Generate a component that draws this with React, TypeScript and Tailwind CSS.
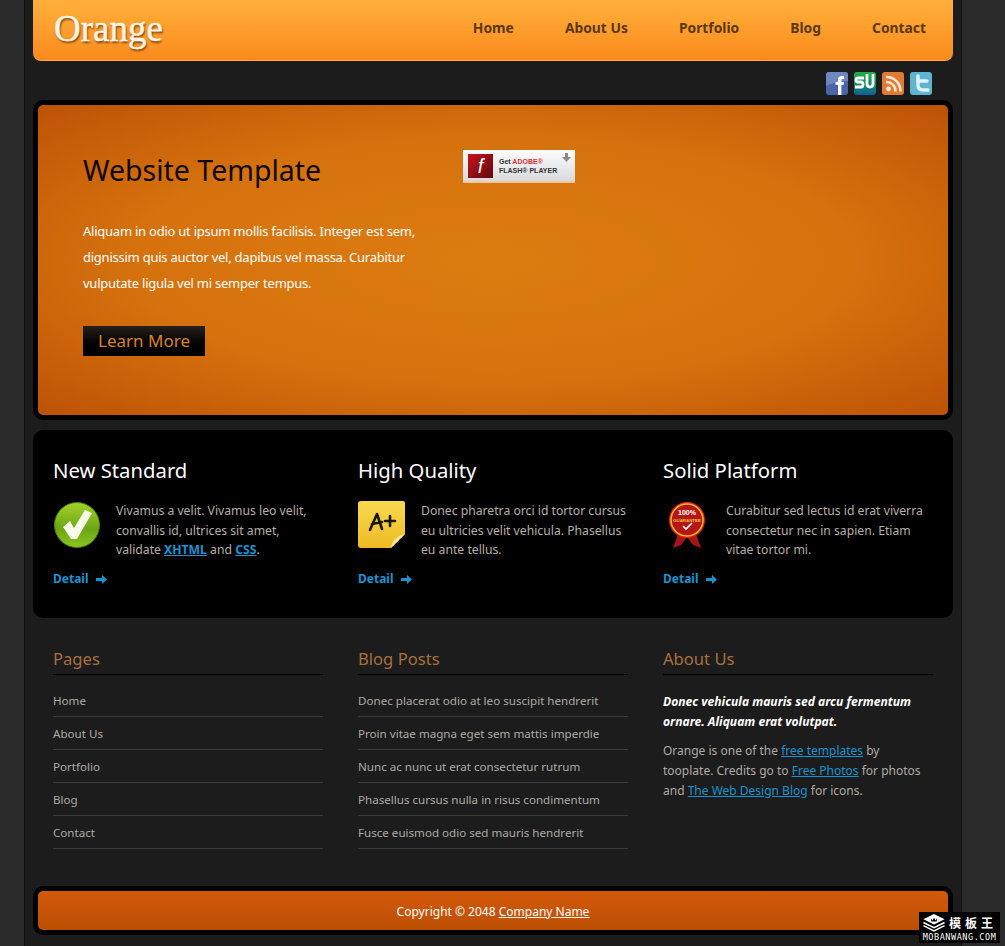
import React from 'react';

const font = { fontFamily: '"Noto Sans", "DejaVu Sans", sans-serif' };

const features = [
  { title: 'New Standard', icon: 'check', lines: null },
  { title: 'High Quality', icon: 'note', lines: 'Donec pharetra orci id tortor cursus eu ultricies velit vehicula. Phasellus eu ante tellus.' },
  { title: 'Solid Platform', icon: 'seal', lines: 'Curabitur sed lectus id erat viverra consectetur nec in sapien. Etiam vitae tortor mi.' },
];

const pages = ['Home', 'About Us', 'Portfolio', 'Blog', 'Contact'];
const posts = [
  'Donec placerat odio at leo suscipit hendrerit',
  'Proin vitae magna eget sem mattis imperdie',
  'Nunc ac nunc ut erat consectetur rutrum',
  'Phasellus cursus nulla in risus condimentum',
  'Fusce euismod odio sed mauris hendrerit',
];

function CheckIcon() {
  return (
    <svg width="48" height="48" viewBox="0 0 48 48">
      <defs>
        <linearGradient id="chk" x1="0" y1="0" x2="0" y2="1">
          <stop offset="0" stopColor="#a4d12c" />
          <stop offset="0.6" stopColor="#6ba513" />
          <stop offset="1" stopColor="#8cc522" />
        </linearGradient>
      </defs>
      <circle cx="24" cy="24" r="22.5" fill="url(#chk)" stroke="#4c7d10" strokeWidth="1" />
      <path d="M10 26 L17 20 L21 27 L32 9 L39 12 L24 38 L18 38 Z" fill="#f8faea" />
    </svg>
  );
}

function NoteIcon() {
  return (
    <svg width="48" height="48" viewBox="0 0 48 48">
      <defs>
        <linearGradient id="note" x1="0" y1="0" x2="0" y2="1">
          <stop offset="0" stopColor="#f7da4e" />
          <stop offset="1" stopColor="#eebb25" />
        </linearGradient>
      </defs>
      <path d="M3 0 H45 Q47 0 47 3 V33 L33 47 H3 Q0 47 0 44 V3 Q0 0 3 0 Z" fill="url(#note)" />
      <path d="M47 33 L33 47 Q34 36 47 33 Z" fill="#fbe88e" />
      <path d="M12 29 L19 13 L24 28 M14 23 L24 21 M27 20 H37 M32 15 V25" fill="none" stroke="#1c1608" strokeWidth="2.6" strokeLinecap="round" strokeLinejoin="round" />
    </svg>
  );
}

function SealIcon() {
  return (
    <svg width="48" height="48" viewBox="0 0 48 48">
      <path d="M16 30 L10 47 L18 44 L24 36 L30 44 L38 47 L32 30 Z" fill="#a5141a" />
      <circle cx="24" cy="19" r="18" fill="#e0201c" />
      <circle cx="24" cy="19" r="16" fill="#b51716" stroke="#f4b830" strokeWidth="1.5" />
      <text x="24" y="14" textAnchor="middle" fontSize="7" fontWeight="700" fill="#fff" fontFamily="Liberation Sans">100%</text>
      <text x="24" y="21" textAnchor="middle" fontSize="4.4" fontWeight="700" fill="#f4c040" fontFamily="Liberation Sans">GUARANTEE</text>
      <path d="M20 25 L23 28 L29 22" fill="none" stroke="#fff" strokeWidth="1.6" />
    </svg>
  );
}

function Social() {
  return (
    <div className="flex justify-end gap-[6px] pr-[21px] pt-[11px] h-[39px]">
      <svg width="22" height="23" viewBox="0 0 22 23">
        <rect width="22" height="23" rx="3" fill="#4a66a8" />
        <path d="M0 3 Q0 0 3 0 H19 Q22 0 22 3 V9 Q10 9 0 14 Z" fill="#6f88bf" />
        <path d="M12 23 V13 H9.5 V10 H12 V7.5 Q12 4 16 4 H18 V7 H16.5 Q15.4 7 15.4 8.2 V10 H18 L17.5 13 H15.4 V23 Z" fill="#fff" />
      </svg>
      <svg width="22" height="23" viewBox="0 0 22 23">
        <defs>
          <linearGradient id="stumble" x1="0" y1="0" x2="0" y2="1">
            <stop offset="0" stopColor="#22b04a" />
            <stop offset="0.6" stopColor="#0f8a66" />
            <stop offset="1" stopColor="#125f9c" />
          </linearGradient>
        </defs>
        <rect width="22" height="23" rx="3" fill="url(#stumble)" />
        <path d="M10 6 H4 Q2 6 2 8 Q2 10 4 10 H7 Q9 10 9 12.5 Q9 15 7 15 H1 M13 2 V12 Q13 15 16 15 Q19 15 19 12 V2" fill="none" stroke="#fff" strokeWidth="2.8" />
      </svg>
      <svg width="22" height="23" viewBox="0 0 22 23">
        <rect width="22" height="23" rx="3" fill="#e07a35" />
        <circle cx="6.5" cy="17" r="2.4" fill="#fbe6d2" />
        <path d="M4 10 A9 9 0 0 1 13.5 19.5 M4 5 A14 14 0 0 1 18.5 19.5" fill="none" stroke="#fbe6d2" strokeWidth="2.6" />
      </svg>
      <svg width="22" height="23" viewBox="0 0 22 23">
        <rect width="22" height="23" rx="3" fill="#5fb4cf" />
        <path d="M8 4 V13 Q8 18 13 18 H18 M8 9 H17" fill="none" stroke="#dff4fa" strokeWidth="3.4" strokeLinecap="round" />
      </svg>
    </div>
  );
}

function FlashBadge() {
  return (
    <div className="w-[112px] h-[33px] bg-gradient-to-b from-[#fdfdfd] to-[#d9dadd] border-b-2 border-[#f2c89a] flex items-center relative">
      <div className="ml-[5px] w-[25px] h-[24px] bg-gradient-to-br from-[#c8141c] to-[#5e0a0e] text-white flex items-center justify-center text-[20px] italic leading-none" style={{ fontFamily: '"Liberation Sans", sans-serif' }}>f</div>
      <div className="ml-[6px] text-[7px] font-bold leading-[9px] text-[#333]" style={{ fontFamily: '"Liberation Sans", sans-serif' }}>
        <div>Get <span className="text-[#d8303a]">ADOBE®</span></div>
        <div>FLASH® PLAYER</div>
      </div>
      <svg className="absolute right-[4px] top-[3px]" width="9" height="10" viewBox="0 0 9 10">
        <path d="M3 0 H6 V4 H9 L4.5 9 L0 4 H3 Z" fill="#8a8a8a" />
      </svg>
    </div>
  );
}

function Detail() {
  return (
    <a className="flex items-center gap-[7px] text-[12px] font-bold text-[#1a94d0] leading-[16px]">
      Detail
      <svg width="11" height="9" viewBox="0 0 11 9">
        <path d="M0 3 H6 V0 L11 4.5 L6 9 V6 H0 Z" fill="#1a94d0" />
      </svg>
    </a>
  );
}

function Watermark() {
  return (
    <div className="absolute right-[5px] bottom-[3px] w-[81px] h-[31px] bg-black flex flex-col items-center justify-center text-white">
      <div className="flex items-center gap-[3px] h-[19px] whitespace-nowrap">
        <svg className="shrink-0" width="24" height="19" viewBox="0 0 22 18">
          <path d="M11 1 L21 6 L11 11 L1 6 Z" fill="#fff" />
          <path d="M8 5 L9.5 7 L11 4.5 L12.5 7 L14 5 L13.5 8 H8.5 Z" fill="#000" />
          <path d="M1 9 L11 14 L21 9 M1 12 L11 17 L21 12" fill="none" stroke="#fff" strokeWidth="1.4" />
        </svg>
        <span className="text-[12px] font-bold tracking-[4px] leading-none" style={{ fontFamily: '"Noto Sans CJK SC", sans-serif' }}>模板王</span>
      </div>
      <div className="text-[8.5px] tracking-[0.55px] leading-[10px]" style={{ fontFamily: '"DejaVu Sans Mono", monospace' }}>MOBANWANG.COM</div>
    </div>
  );
}

export default function App() {
  return (
    <div className="relative h-[946px] overflow-hidden bg-[#2a2a2a]" style={font}>
      <div className="ml-[24px] w-[938px] h-full border-x border-[#0f0f0f] bg-[#1c1c1c] px-[8px]">
        {/* header */}
        <header className="h-[61px] rounded-b-[8px] bg-gradient-to-b from-[#ffb03a] to-[#fb8a1c] border-b border-[#ffa845] flex items-center justify-between">
          <div className="pl-[21px] text-[37px] leading-none text-[#fdf6e8] pb-[4px] [-webkit-text-stroke:0.4px_#fdf6e8] [text-shadow:1px_2px_2px_#7a4310]" style={{ fontFamily: '"Liberation Serif", serif' }}>Orange</div>
          <nav className="flex gap-[51px] pr-[27px] pb-[3px] text-[13.85px] font-bold text-[#5c3714]">
            {pages.map((p) => <a key={p}>{p}</a>)}
          </nav>
        </header>

        <Social />

        {/* hero */}
        <section className="h-[320px] rounded-[10px] border-[5px] border-black bg-[radial-gradient(ellipse_at_center,#dc7c10_0%,#d6720e_55%,#bd5206_100%)] pl-[45px] pt-[45px] flex">
          <div className="w-[380px]">
            <h1 className="text-[28.5px] leading-[40px] text-[#0f0802]">Website Template</h1>
            <p className="mt-[28px] w-[345px] text-[13px] tracking-[-0.24px] leading-[26px] text-white">
              Aliquam in odio ut ipsum mollis facilisis. Integer est sem, dignissim quis auctor vel, dapibus vel massa. Curabitur vulputate ligula vel mi semper tempus.
            </p>
            <a className="mt-[30px] flex items-center justify-center w-[122px] h-[30px] bg-gradient-to-b from-[#26211c] to-black text-[17px] text-[#d9822b]">Learn More</a>
          </div>
          <FlashBadge />
        </section>

        {/* features */}
        <section className="mt-[10px] h-[188px] rounded-[10px] bg-black px-[20px] pt-[24px] grid grid-cols-3 gap-x-[35px]">
          {features.map((f) => (
            <div key={f.title}>
              <h2 className="text-[20.3px] leading-[32px] text-white">{f.title}</h2>
              <div className="mt-[15px] flex h-[66px]">
                <div className="w-[63px] shrink-0">
                  {f.icon === 'check' && <CheckIcon />}
                  {f.icon === 'note' && <NoteIcon />}
                  {f.icon === 'seal' && <SealIcon />}
                </div>
                <p className="text-[12.2px] leading-[19.5px] text-[#b8aea5]">
                  {f.lines ?? (
                    <>Vivamus a velit. Vivamus leo velit, convallis id, ultrices sit amet, validate <a className="font-bold underline text-[#1a94d0]">XHTML</a> and <a className="font-bold underline text-[#1a94d0]">CSS</a>.</>
                  )}
                </p>
              </div>
              <div className="mt-[4px]"><Detail /></div>
            </div>
          ))}
        </section>

        {/* footer columns */}
        <section className="px-[20px] pt-[28px] grid grid-cols-3 gap-x-[35px] h-[268px]">
          <div>
            <h3 className="text-[16.6px] leading-[26px] pb-[2px] text-[#a8703c] border-b border-black">Pages</h3>
            <ul className="mt-[9px]">
              {pages.map((p) => <li key={p} className="h-[33px] leading-[33px] text-[11.6px] text-[#b0aaa4] border-b border-[#3a3a3a]">{p}</li>)}
            </ul>
          </div>
          <div>
            <h3 className="text-[16.6px] leading-[26px] pb-[2px] text-[#a8703c] border-b border-black">Blog Posts</h3>
            <ul className="mt-[9px]">
              {posts.map((p) => <li key={p} className="h-[33px] leading-[33px] text-[11.6px] text-[#b0aaa4] border-b border-[#3a3a3a] whitespace-nowrap">{p}</li>)}
            </ul>
          </div>
          <div>
            <h3 className="text-[16.6px] leading-[26px] pb-[2px] text-[#a8703c] border-b border-black">About Us</h3>
            <p className="mt-[17px] text-[12.1px] leading-[20px] font-bold italic text-white">Donec vehicula mauris sed arcu fermentum ornare. Aliquam erat volutpat.</p>
            <p className="mt-[9px] w-[265px] text-[12px] leading-[20px] text-[#b0aaa4]">
              Orange is one of the <a className="underline text-[#1a94d0]">free templates</a> by tooplate. Credits go to <a className="underline text-[#1a94d0]">Free Photos</a> for photos and <a className="underline text-[#1a94d0]">The Web Design Blog</a> for icons.
            </p>
          </div>
        </section>

        {/* bottom bar */}
        <footer className="h-[49px] rounded-[10px] border-[5px] border-black bg-gradient-to-b from-[#d4590a] to-[#bb4f04] flex items-center justify-center pt-[2px] text-[12px] text-white">
          <span>Copyright © 2048 <a className="underline">Company Name</a></span>
        </footer>
      </div>
      <Watermark />
    </div>
  );
}
